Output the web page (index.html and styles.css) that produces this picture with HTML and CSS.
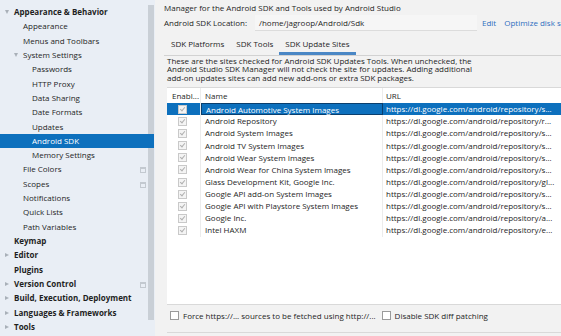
FILE: index.html
```html
<!DOCTYPE html>
<html lang="en">
<head>
    <meta charset="UTF-8">
    <title>Settings - Android SDK</title>
    <link rel="stylesheet" href="styles.css">
</head>
<body>
    <div class="sidebar">
        <div class="tree">
            <div class="node lvl1 bold open">Appearance &amp; Behavior</div>
            <div class="node lvl2">Appearance</div>
            <div class="node lvl2">Menus and Toolbars</div>
            <div class="node lvl2 open">System Settings</div>
            <div class="node lvl3">Passwords</div>
            <div class="node lvl3">HTTP Proxy</div>
            <div class="node lvl3">Data Sharing</div>
            <div class="node lvl3">Date Formats</div>
            <div class="node lvl3">Updates</div>
            <div class="node lvl3 selected">Android SDK</div>
            <div class="node lvl3">Memory Settings</div>
            <div class="node lvl2">File Colors <span class="proj-icon"></span></div>
            <div class="node lvl2">Scopes <span class="proj-icon"></span></div>
            <div class="node lvl2">Notifications</div>
            <div class="node lvl2">Quick Lists</div>
            <div class="node lvl2">Path Variables</div>
            <div class="node lvl1 bold">Keymap</div>
            <div class="node lvl1 bold closed">Editor</div>
            <div class="node lvl1 bold">Plugins</div>
            <div class="node lvl1 bold closed">Version Control <span class="proj-icon"></span></div>
            <div class="node lvl1 bold closed">Build, Execution, Deployment</div>
            <div class="node lvl1 bold closed">Languages &amp; Frameworks</div>
            <div class="node lvl1 bold closed">Tools</div>
        </div>
        <div class="scrollbar"></div>
    </div>

    <div class="main">
        <div class="intro">Manager for the Android SDK and Tools used by Android Studio</div>
        <div class="location">
            <span class="loc-label">Android SDK Location:</span>
            <span class="loc-field">/home/jagroop/Android/Sdk</span>
            <a class="link">Edit</a>
            <a class="link">Optimize disk space</a>
        </div>
        <div class="tabs">
            <span class="tab">SDK Platforms</span>
            <span class="tab">SDK Tools</span>
            <span class="tab active">SDK Update Sites</span>
        </div>
        <div class="tab-panel">
            <p class="desc">These are the sites checked for Android SDK Updates Tools. When unchecked, the<br>
                Android Studio SDK Manager will not check the site for updates. Adding additional<br>
                add-on updates sites can add new add-ons or extra SDK packages.</p>
            <div class="table">
                <div class="row head">
                    <span class="c-en">Enabl...</span>
                    <span class="c-name">Name</span>
                    <span class="c-url">URL</span>
                </div>
                <div class="row sel">
                    <span class="c-en"><i class="cb"></i></span>
                    <span class="c-name">Android Automotive System Images</span>
                    <span class="c-url">https://dl.google.com/android/repository/s...</span>
                </div>
                <div class="row">
                    <span class="c-en"><i class="cb"></i></span>
                    <span class="c-name">Android Repository</span>
                    <span class="c-url">https://dl.google.com/android/repository/r...</span>
                </div>
                <div class="row">
                    <span class="c-en"><i class="cb"></i></span>
                    <span class="c-name">Android System Images</span>
                    <span class="c-url">https://dl.google.com/android/repository/s...</span>
                </div>
                <div class="row">
                    <span class="c-en"><i class="cb"></i></span>
                    <span class="c-name">Android TV System Images</span>
                    <span class="c-url">https://dl.google.com/android/repository/s...</span>
                </div>
                <div class="row">
                    <span class="c-en"><i class="cb"></i></span>
                    <span class="c-name">Android Wear System Images</span>
                    <span class="c-url">https://dl.google.com/android/repository/s...</span>
                </div>
                <div class="row">
                    <span class="c-en"><i class="cb"></i></span>
                    <span class="c-name">Android Wear for China System Images</span>
                    <span class="c-url">https://dl.google.com/android/repository/s...</span>
                </div>
                <div class="row">
                    <span class="c-en"><i class="cb"></i></span>
                    <span class="c-name">Glass Development Kit, Google Inc.</span>
                    <span class="c-url">https://dl.google.com/android/repository/gl...</span>
                </div>
                <div class="row">
                    <span class="c-en"><i class="cb"></i></span>
                    <span class="c-name">Google API add-on System Images</span>
                    <span class="c-url">https://dl.google.com/android/repository/s...</span>
                </div>
                <div class="row">
                    <span class="c-en"><i class="cb"></i></span>
                    <span class="c-name">Google API with Playstore System Images</span>
                    <span class="c-url">https://dl.google.com/android/repository/s...</span>
                </div>
                <div class="row">
                    <span class="c-en"><i class="cb"></i></span>
                    <span class="c-name">Google Inc.</span>
                    <span class="c-url">https://dl.google.com/android/repository/a...</span>
                </div>
                <div class="row">
                    <span class="c-en"><i class="cb"></i></span>
                    <span class="c-name">Intel HAXM</span>
                    <span class="c-url">https://dl.google.com/android/repository/e...</span>
                </div>
            </div>
            <div class="options">
                <label class="opt"><i class="box"></i>Force https://... sources to be fetched using http://...</label>
                <label class="opt"><i class="box"></i>Disable SDK diff patching</label>
            </div>
        </div>
    </div>
</body>
</html>
```

FILE: styles.css
```css
body {
    margin: 0;
    height: 336px;
    display: flex;
    overflow: hidden;
    font-family: "Open Sans", "Noto Sans", sans-serif;
    font-size: 8px;
    color: #1e1e1e;
    background-color: #f2f2f2;
}

/* settings tree */
.sidebar {
    position: relative;
    width: 155px;
    flex-shrink: 0;
    background-color: #e9eef5;
}
.tree {
    padding-top: 5px;
}
.node {
    position: relative;
    height: 14.32px;
    line-height: 14.32px;
    white-space: nowrap;
    z-index: 1;
}
.lvl1 { padding-left: 14px; }
.lvl2 { padding-left: 23px; }
.lvl3 { padding-left: 32px; }
.bold { font-weight: bold; }
.node.open::before,
.node.closed::before {
    content: "";
    position: absolute;
    top: 5px;
}
.node.open::before {
    border-left: 2.5px solid transparent;
    border-right: 2.5px solid transparent;
    border-top: 4px solid #a9b0b8;
}
.node.closed::before {
    border-top: 2.5px solid transparent;
    border-bottom: 2.5px solid transparent;
    border-left: 4px solid #a9b0b8;
}
.lvl1.open::before, .lvl1.closed::before { left: 5px; }
.lvl2.open::before { left: 14px; }
.node.selected {
    background-color: #0d70bd;
    color: #fff;
    width: 122px;
}
.proj-icon {
    position: absolute;
    left: 140px;
    top: 5px;
    width: 4px;
    height: 3px;
    border: 1px solid #c3c9d0;
    border-top-width: 2px;
}
.scrollbar {
    position: absolute;
    left: 148px;
    top: 5px;
    width: 6px;
    height: 315px;
    background-color: #c9cfd6;
}

/* right panel */
.main {
    flex: 1;
    padding-left: 9px;
    min-width: 0;
    overflow: hidden;
}
.intro {
    height: 14px;
    line-height: 16px;
    white-space: nowrap;
}
.location {
    display: flex;
    align-items: center;
    height: 17px;
    white-space: nowrap;
}
.location > * {
    flex-shrink: 0;
}
.loc-label {
    width: 91px;
}
.loc-field {
    width: 218px;
    height: 15px;
    line-height: 15px;
    padding-left: 4px;
    background-color: #f6f6f6;
    border-bottom: 1px solid #dcdcdc;
    margin-right: 5px;
}
.link {
    color: #2e6ec0;
    margin-right: 8px;
}
.tabs {
    display: flex;
    height: 21px;
    margin-top: 3px;
    padding-left: 1px;
    border-bottom: 1px solid #d2d2d2;
    white-space: nowrap;
}
.tab {
    padding: 0 6px;
    line-height: 19px;
}
.tab.active {
    border-bottom: 3px solid #4a87c5;
}
.tab-panel {
    padding-left: 3px;
}
.desc {
    margin: 1px 0 0;
    line-height: 8.4px;
    white-space: nowrap;
}
.table {
    margin-top: 5px;
    height: 216px;
    background-color: #fff;
    border-top: 1px solid #d9d9d9;
    border-bottom: 1px solid #d9d9d9;
}
.row {
    display: flex;
    height: 12.13px;
    line-height: 12.13px;
    white-space: nowrap;
}
.row.head {
    height: 15px;
    line-height: 15px;
}
.c-en {
    width: 34px;
    flex-shrink: 0;
    padding-left: 4px;
    box-sizing: border-box;
    border-right: 1px solid #ececec;
}
.c-name {
    width: 182px;
    flex-shrink: 0;
    padding-left: 4px;
    box-sizing: border-box;
    border-right: 1px solid #ececec;
}
.c-url {
    padding-left: 3px;
}
.row .c-en {
    display: flex;
    align-items: center;
    padding-left: 11px;
}
.head .c-en {
    display: block;
    padding-left: 5px;
}
.row.sel {
    background-color: #0d70bd;
    color: #fff;
}
.row.sel .c-name {
    border: 1px solid #0a3f6e;
}
.cb {
    width: 7px;
    height: 7px;
    border: 1px solid #c9c9c9;
    background-color: #f4f4f4;
    position: relative;
}
.cb::after {
    content: "";
    position: absolute;
    left: 2px;
    top: 0;
    width: 2px;
    height: 4px;
    border-right: 1px solid #b0b0b0;
    border-bottom: 1px solid #b0b0b0;
    transform: rotate(40deg);
}
.options {
    display: flex;
    height: 20px;
    padding-bottom: 7px;
    align-items: center;
    padding-left: 3px;
    border-bottom: 1px solid #d9d9d9;
    white-space: nowrap;
}
.opt {
    display: flex;
    align-items: center;
    margin-right: 6px;
}
.box {
    width: 7px;
    height: 7px;
    border: 1px solid #9a9a9a;
    background-color: #fff;
    margin-right: 4px;
}
```
